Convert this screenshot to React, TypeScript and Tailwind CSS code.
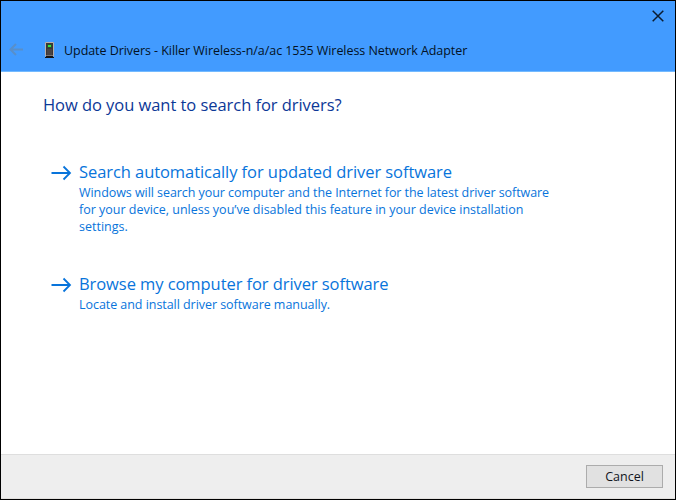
import React from 'react';

function Arrow() {
  return (
    <svg className="mt-[5px] h-4 w-[21px] shrink-0" viewBox="0 0 21 16" fill="none" stroke="#0874db" strokeWidth="1.8">
      <path d="M0.5 8H19M12.5 1.5L19 8L12.5 14.5" />
    </svg>
  );
}

export default function App() {
  return (
    <div className="flex h-[500px] w-[676px] flex-col overflow-hidden border border-black bg-white font-['Open_Sans','Noto_Sans',sans-serif] whitespace-nowrap">
      <header className="flex h-[71px] shrink-0 flex-col border-b border-[#73baff] bg-[#429bff]">
        <div className="flex h-[30px] justify-end pt-[9px] pr-[11px]">
          <svg className="h-3 w-3" viewBox="0 0 12 12" fill="none" stroke="#0b1c30" strokeWidth="1.5">
            <path d="M0.7 0.7L11.3 11.3M11.3 0.7L0.7 11.3" />
          </svg>
        </div>
        <div className="flex h-10 items-start pl-2">
          <svg className="mt-[12px] h-[13px] w-[15px]" viewBox="0 0 15 13" fill="none" stroke="#588fca" strokeWidth="2">
            <path d="M14 6.5H1.5M7 1L1.5 6.5L7 12" />
          </svg>
          <svg className="mt-[10px] ml-[20px] h-[18px] w-[11px]" viewBox="0 0 11 18">
            <path d="M1.5 1.5H9.5V15H1.5Z" fill="#3b3536" stroke="#b9b0ac" />
            <path d="M3 3H8V7H3Z" fill="#2c4a30" />
            <path d="M4 4H7V6H4Z" fill="#35e541" />
            <path d="M3 8H8V14H3Z" fill="#484344" />
            <path d="M2 15H9V16H10V17H1V16H2Z" fill="#141416" />
          </svg>
          <h1 className="ml-[9px] pt-[11px] text-[12.5px] leading-[18px] tracking-[-0.06px] text-[#031225]">Update Drivers - Killer Wireless-n/a/ac 1535 Wireless Network Adapter</h1>
        </div>
      </header>
      <main className="flex-1 pt-[21px] pl-[42px] text-[#0874db]">
        <h2 className="text-[16.5px] leading-6 tracking-[-0.05px] text-[#0c3897]">How do you want to search for drivers?</h2>
        <button className="mt-[43px] ml-2 flex text-left">
          <Arrow />
          <span className="ml-[7px] flex flex-col">
            <span className="text-[16.5px] leading-6 tracking-[-0.07px]">Search automatically for updated driver software</span>
            <span className="text-[12.5px] leading-[17px] tracking-[-0.06px]">Windows will search your computer and the Internet for the latest driver software</span>
            <span className="text-[12.5px] leading-[17px] tracking-[-0.01px]">for your device, unless you’ve disabled this feature in your device installation</span>
            <span className="text-[12.5px] leading-[17px]">settings.</span>
          </span>
        </button>
        <button className="mt-[37px] ml-2 flex text-left">
          <Arrow />
          <span className="ml-[7px] flex flex-col">
            <span className="text-[16.5px] leading-6 tracking-[-0.07px]">Browse my computer for driver software</span>
            <span className="text-[12.5px] leading-[17px] tracking-[-0.05px]">Locate and install driver software manually.</span>
          </span>
        </button>
      </main>
      <footer className="flex h-[45px] shrink-0 items-start justify-end border-t border-b border-t-[#dedede] border-b-[#e2e0de] bg-[#eeeeee] pt-[10px] pr-3">
        <button className="h-[23px] w-[77px] border border-[#acacac] bg-[#e1e1e1] text-[12.5px] leading-[21px] text-[#10141c]">Cancel</button>
      </footer>
    </div>
  );
}
